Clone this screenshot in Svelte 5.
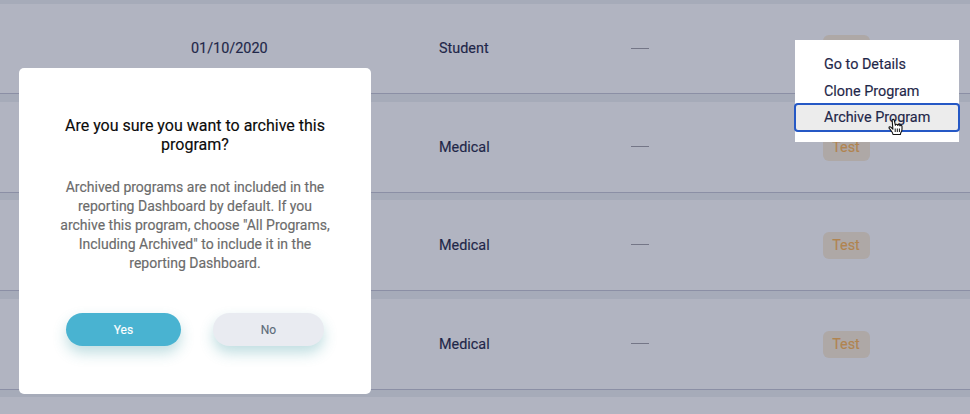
<script>
  const rows = [
    { date: '01/10/2020', type: 'Student', height: 90, gap: 8 },
    { date: '', type: 'Medical', height: 91, gap: 7 },
    { date: '', type: 'Medical', height: 91, gap: 8 },
    { date: '', type: 'Medical', height: 91, gap: 7 }
  ];
  const actions = ['Go to Details', 'Clone Program', 'Archive Program'];
</script>

<main class="screen">
  <div class="list">
    {#each rows as row}
      <div class="row" style="height: {row.height}px; margin-bottom: {row.gap}px">
        <span class="date">{row.date}</span>
        <span class="type">{row.type}</span>
        <span class="dash"><i></i></span>
        <span class="tag">Test</span>
      </div>
    {/each}
    <div class="row last"></div>
  </div>

  <section class="dialog" role="dialog" aria-modal="true">
    <h2>Are you sure you want to archive this<br />program?</h2>
    <p>
      Archived programs are not included in the<br />reporting Dashboard by default. If you<br />archive
      this program, choose "All Programs,<br />Including Archived" to include it in the<br />reporting
      Dashboard.
    </p>
    <div class="buttons">
      <button class="yes">Yes</button>
      <button class="no">No</button>
    </div>
  </section>

  <nav class="menu">
    {#each actions as action, i}
      <a class:active={i === 2} href="#top">{action}</a>
    {/each}
  </nav>

  <svg class="cursor" width="16" height="18" viewBox="0 0 16 18">
    <path
      d="M4.9 11.2 3.1 9.3C2.3 8.5 1.1 8.8 1 9.5c-.1.6.4 1.1.9 1.7l2 2.6c.6.9.9 1.6 1.1 2.7h7.4c.1-1.1.4-1.7.8-2.4.6-1 .8-1.8.8-3V8.4c0-1.5-1.8-1.6-2-.4 0-1.7-2.1-1.8-2.3-.5 0-1.6-2.2-1.6-2.3-.2L6.3 2.3C6 .8 3.9 1.2 4.2 2.7Z"
      fill="#fff" stroke="#111" stroke-width="1.1" stroke-linejoin="round" />
    <path d="M7.2 10.5v3.5M9.3 10.5v3.5M11.4 10.5v3.5" stroke="#111" stroke-width="1" fill="none" />
  </svg>
</main>

<style>
  .screen {
    position: relative;
    width: 970px;
    height: 414px;
    overflow: hidden;
    background: #a6abb9;
    font-family: Roboto, sans-serif;
    color: #1f2749;
    -webkit-text-stroke: 0.15px currentColor;
  }
  .list {
    display: flex;
    flex-direction: column;
    padding-top: 4px;
  }
  .row {
    box-sizing: border-box;
    flex: none;
    display: grid;
    grid-template-columns: 248px 192px 192px 1fr;
    align-items: center;
    padding-left: 191px;
    background: #b1b4c1;
    border-bottom: 1px solid #8b8fa5;
    font-size: 14.4px;
    line-height: 21px;
  }
  .last {
    height: 90px;
  }
  .dash i {
    display: block;
    width: 18px;
    height: 1px;
    margin-bottom: 1px;
    background: #747687;
  }
  .tag {
    justify-self: start;
    box-sizing: border-box;
    width: 47px;
    height: 27px;
    padding-right: 1px;
    border-radius: 6px;
    background: #aea8a6;
    color: #b1844f;
    line-height: 27px;
    text-align: center;
  }
  .dialog {
    position: absolute;
    left: 19px;
    top: 68px;
    box-sizing: border-box;
    width: 352px;
    height: 326px;
    padding: 48px 40px 0;
    border-radius: 5px;
    background: #fff;
    text-align: center;
  }
  h2 {
    margin: 0;
    font-size: 16px;
    font-weight: 400;
    line-height: 19px;
    color: #0b0b0b;
    white-space: nowrap;
  }
  p {
    margin: 24px 0 0;
    font-size: 14px;
    line-height: 19px;
    color: #6b6b6b;
    white-space: nowrap;
  }
  .buttons {
    display: flex;
    gap: 32px;
    margin: 40px 0 0 7px;
  }
  button {
    height: 33px;
    padding: 1px 0 0;
    border: 0;
    border-radius: 17px;
    font: 400 12px/32px Roboto, sans-serif;
    box-shadow: 0 7px 14px rgba(45, 145, 155, 0.3);
  }
  .yes {
    width: 115px;
    background: #49b3d1;
    color: #fff;
  }
  .no {
    width: 111px;
    background: #e9ebf1;
    color: #5d6b7a;
  }
  .menu {
    position: absolute;
    left: 795px;
    top: 40px;
    box-sizing: border-box;
    width: 164px;
    height: 102px;
    padding-top: 11px;
    background: #fff;
  }
  .menu a {
    display: block;
    height: 26.5px;
    padding-left: 29px;
    font-size: 14.4px;
    line-height: 27px;
    color: #1f2749;
    text-decoration: none;
    white-space: nowrap;
  }
  .menu .active {
    box-sizing: border-box;
    height: 29px;
    margin: -1px -1px 0;
    padding-left: 28px;
    border: 2px solid #2558c5;
    border-radius: 4px;
    background: #ececec;
    line-height: 25px;
  }
  .cursor {
    position: absolute;
    left: 888px;
    top: 118px;
  }
</style>
